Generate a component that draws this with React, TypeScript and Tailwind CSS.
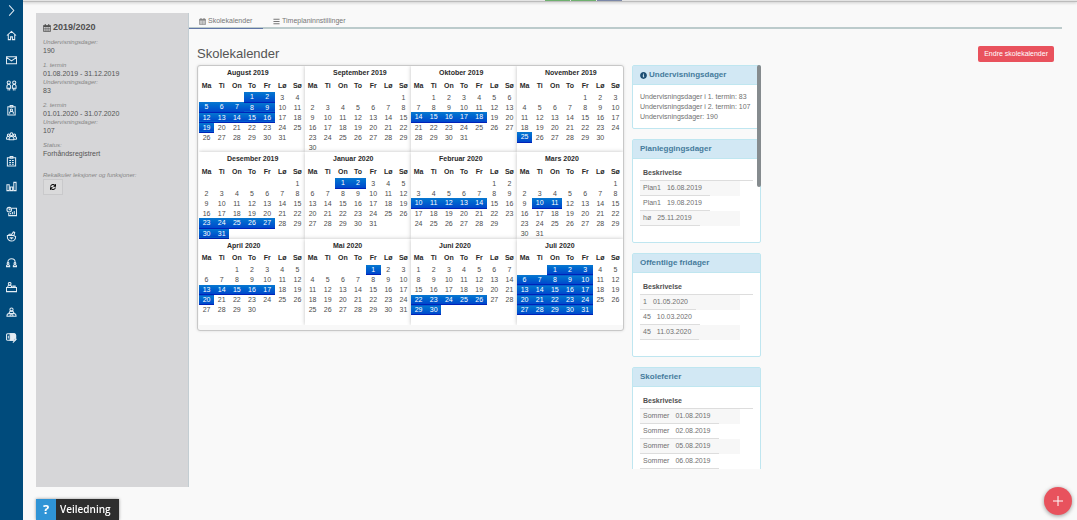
import type { ReactNode } from "react";
import { FaBars, FaInfoCircle, FaSync } from "react-icons/fa";
import { clsx } from "clsx";

type Month = {
  name: string;
  // index of the weekday of the 1st, monday = 0
  start: number;
  days: number;
  off: number[];
};

const WEEKDAYS = ["Ma", "Ti", "On", "To", "Fr", "Lø", "Sø"];

const MONTHS: Month[] = [
  { name: "August 2019", start: 3, days: 31, off: [1, 2, 5, 6, 7, 8, 9, 12, 13, 14, 15, 16, 19] },
  { name: "September 2019", start: 6, days: 30, off: [] },
  { name: "Oktober 2019", start: 1, days: 31, off: [14, 15, 16, 17, 18] },
  { name: "November 2019", start: 4, days: 30, off: [25] },
  { name: "Desember 2019", start: 6, days: 31, off: [23, 24, 25, 26, 27, 30, 31] },
  { name: "Januar 2020", start: 2, days: 31, off: [1, 2] },
  { name: "Februar 2020", start: 5, days: 29, off: [10, 11, 12, 13, 14] },
  { name: "Mars 2020", start: 6, days: 31, off: [10, 11] },
  { name: "April 2020", start: 2, days: 30, off: [13, 14, 15, 16, 17, 20] },
  { name: "Mai 2020", start: 4, days: 31, off: [1] },
  { name: "Juni 2020", start: 0, days: 30, off: [22, 23, 24, 25, 26, 29, 30] },
  {
    name: "Juli 2020",
    start: 2,
    days: 31,
    off: [1, 2, 3, 6, 7, 8, 9, 10, 13, 14, 15, 16, 17, 20, 21, 22, 23, 24, 27, 28, 29, 30, 31],
  },
];

const NAV: { label: string; icon: ReactNode }[] = [
  { label: "Utvid meny", icon: <path d="M7 1l10 11L7 23" /> },
  { label: "Hjem", icon: <path d="M2 12L12 3l10 9M5 10v11h5v-6h4v6h5V10" /> },
  { label: "Meldinger", icon: <path d="M1 4h22v15H1zM1 5l11 8 11-8" /> },
  {
    label: "Elever",
    icon: (
      <>
        <circle cx="6" cy="5.500" r="3.500" />
        <circle cx="18" cy="5.500" r="3.500" />
        <path d="M2 18v-5l2-3h4l2 3v5zM14 18v-5l2-3h4l2 3v5zM4.500 23v-5M8 23v-5M16 23v-5M19.500 23v-5" />
      </>
    ),
  },
  {
    label: "Ansatte",
    icon: (
      <>
        <path d="M4 4h16v18H4zM9 1h6v4H9z" />
        <circle cx="12" cy="11" r="2.5" />
        <path d="M8 19v-3l2-2h4l2 2v3" />
      </>
    ),
  },
  {
    label: "Grupper",
    icon: (
      <>
        <circle cx="12" cy="7" r="3" />
        <circle cx="5.5" cy="9" r="2.5" />
        <circle cx="18.5" cy="9" r="2.5" />
        <path d="M7 19v-4l3-3h4l3 3v4zM1 18v-3l2-3h4M23 18v-3l-2-3h-4M1 18h6M17 18h6" />
      </>
    ),
  },
  {
    label: "Timeplan",
    icon: <path d="M3 4h18v18H3zM9 1h6v4H9zM7 10h4M13 10h4M7 14h4M13 14h4M7 18h4M13 18h4" />,
  },
  { label: "Statistikk", icon: <path d="M2 8h5v13H2zM9.500 13h5v8h-5zM17 3h5v18h-5z" /> },
  {
    label: "Fravær",
    icon: (
      <>
        <circle cx="7" cy="8" r="5" />
        <path d="M7 5v3h3M13 5h10v16H6v-6M10 18v-3M14 18v-5M18 18v-7" />
      </>
    ),
  },
  {
    label: "Vurdering",
    icon: (
      <>
        <path d="M3 10h13l5 2c0 7-4 10-9 10s-9-4-9-9zM11 10l5-8 3 1-2 8" />
        <path d="M5 10l2-3h5M8 15h8M12 15v3" />
      </>
    ),
  },
  {
    label: "Samtaler",
    icon: (
      <>
        <path d="M4 12c0-6 4-8 8-8s8 2 8 8" />
        <circle cx="4.500" cy="14" r="2" />
        <circle cx="19.500" cy="14" r="2" />
        <path d="M1 21v-2l2-2h3l2 2v2zM16 21v-2l2-2h3l2 2v2z" />
      </>
    ),
  },
  {
    label: "Undervisning",
    icon: (
      <>
        <circle cx="8" cy="4" r="3" />
        <path d="M4 12V9l2-2h4l2 2v3M1 12h22v9H1zM15 12V9h5v3" />
      </>
    ),
  },
  {
    label: "Foresatte",
    icon: (
      <>
        <circle cx="12" cy="5.500" r="3.500" />
        <path d="M6 14l3-5h6l3 5M2 20c0-4 2-6 5-6h10c3 0 5 2 5 6zM9 20v-3h6v3" />
      </>
    ),
  },
  {
    label: "Administrasjon",
    icon: (
      <>
        <rect x="1" y="4" width="20" height="14" rx="3" />
        <path d="M9 4h9l3 3v5l-5 6H9z" fill="currentColor" />
        <path d="M5 8v6M15 23l8-8" />
      </>
    ),
  },
];

const OVERVIEW: [string, string][][] = [
  [["Undervisningsdager:", "190"]],
  [
    ["1. termin", "01.08.2019 - 31.12.2019"],
    ["Undervisningsdager:", "83"],
  ],
  [
    ["2. termin", "01.01.2020 - 31.07.2020"],
    ["Undervisningsdager:", "107"],
  ],
  [["Status:", "Forhåndsregistrert"]],
];

const LISTS: { title: string; rows: [string, string][] }[] = [
  {
    title: "Planleggingsdager",
    rows: [
      ["Plan1", "16.08.2019"],
      ["Plan1", "19.08.2019"],
      ["hø", "25.11.2019"],
    ],
  },
  {
    title: "Offentlige fridager",
    rows: [
      ["1", "01.05.2020"],
      ["45", "10.03.2020"],
      ["45", "11.03.2020"],
    ],
  },
  {
    title: "Skoleferier",
    rows: [
      ["Sommer", "01.08.2019"],
      ["Sommer", "02.08.2019"],
      ["Sommer", "05.08.2019"],
      ["Sommer", "06.08.2019"],
    ],
  },
];

function CalendarIcon({ className }: { className: string }) {
  return (
    <svg viewBox="0 0 16 16" className={className} fill="none" stroke="currentColor">
      <path d="M1 3h14v12H1z" strokeWidth="1.4" />
      <path d="M1 4.500h14" strokeWidth="3" />
      <path d="M4.500 0v4M11.500 0v4" strokeWidth="2" />
      <path d="M1 9h14M1 12h14M4.500 6v9M8 6v9M11.500 6v9" strokeWidth="0.9" />
    </svg>
  );
}

function Sidebar() {
  return (
    <nav className="w-[23px] shrink-0 bg-[#004b7c] pt-[2px]">
      <div className="flex h-[344px] flex-col items-center justify-between">
        {NAV.map((item) => (
          <a key={item.label} href="#" aria-label={item.label} className="flex h-4 items-center text-[#e4edf4]">
            <svg viewBox="0 0 24 24" className="size-[11px]" fill="none" stroke="currentColor" strokeWidth="2.2">
              {item.icon}
            </svg>
          </a>
        ))}
      </div>
    </nav>
  );
}

function YearPanel() {
  return (
    <aside className="mt-[11px] mb-[33px] w-[153px] shrink-0 border-r border-[#c3cdd2] bg-[#d6d6d8] px-[7px] pt-[9px]">
      <h2 className="mb-1 flex h-3 items-center gap-[2px] text-[9px] font-bold text-[#505050]">
        <CalendarIcon className="size-2" />
        2019/2020
      </h2>
      {OVERVIEW.map((group) => (
        <dl key={group[0][0]} className="mb-[6px]">
          {group.map(([label, value]) => (
            <div key={label}>
              <dt className="text-[6px] leading-[8px] text-[#858585] italic">{label}</dt>
              <dd className="text-[7px] leading-[9px] text-[#555]">{value}</dd>
            </div>
          ))}
        </dl>
      ))}
      <p className="mt-[13px] text-[6px] leading-[8px] text-[#858585] italic">Rekalkuler leksjoner og funksjoner:</p>
      <button
        type="button"
        aria-label="Rekalkuler"
        className="flex h-4 w-5 items-center justify-center border border-[#c9c9cb] bg-[#dadadb] text-black"
      >
        <FaSync className="size-[6px]" />
      </button>
    </aside>
  );
}

function MonthTable({ month }: { month: Month }) {
  const weeks = Array.from({ length: 6 }, (_, w) =>
    WEEKDAYS.map((_, d) => {
      const day = w * 7 + d - month.start + 1;
      return day > 0 && day <= month.days ? day : null;
    })
  );

  return (
    <div className="bg-white shadow-[0_0_4px_rgba(0,0,0,0.25)]">
      <table className="w-full table-fixed border-collapse text-center text-[7px] text-[#4c4c4c]">
        <caption className="h-[13px] pl-7 text-left leading-[13px] font-bold text-[#2a2a2a]">{month.name}</caption>
        <thead>
          <tr className="h-[13px] leading-[12px] text-[#2a2a2a]">
            {WEEKDAYS.map((d) => (
              <th key={d} className="p-0 font-bold">
                {d}
              </th>
            ))}
          </tr>
        </thead>
        <tbody>
          {weeks.map((week, w) => (
            <tr key={w} className="h-[10px] leading-[9px]">
              {week.map((day, d) => (
                <td
                  key={d}
                  className={clsx(
                    "p-0",
                    day !== null &&
                      month.off.includes(day) &&
                      "border-b border-[#0022b8] bg-linear-to-b from-[#0a78d0] to-[#0046cc] text-white"
                  )}
                >
                  {day}
                </td>
              ))}
            </tr>
          ))}
        </tbody>
      </table>
    </div>
  );
}

function Panel({ title, children }: { title: ReactNode; children: ReactNode }) {
  return (
    <section className="mb-[10px] rounded-[2px] border border-[#bfe6f0] bg-white">
      <h3 className="flex h-[19px] items-center gap-[2px] border-b border-[#bfe6f0] bg-[#d2e8f4] px-[7px] text-[8px] font-bold text-[#457b9c]">
        {title}
      </h3>
      {children}
    </section>
  );
}

function DayList({ rows }: { rows: [string, string][] }) {
  return (
    <table className="mx-[7px] mt-[7px] mb-4 block text-[7px] text-[#707070]">
      <thead className="block">
        <tr className="block">
          <th className="block h-[15px] border-b border-[#ddd] pl-[3px] text-left leading-[14px] font-bold text-[#505050]">
            Beskrivelse
          </th>
        </tr>
      </thead>
      <tbody className="block">
        {rows.map(([name, date]) => (
          <tr key={date} className="flex h-[15px] w-[100px] leading-[14px] odd:bg-[#f7f7f7]">
            <td className="border-b border-[#ddd] px-[3px]">{name}</td>
            <td className="border-b border-[#ddd] pr-2 pl-[3px]">{date}</td>
          </tr>
        ))}
      </tbody>
    </table>
  );
}

export default function App() {
  return (
    <div className="flex min-h-screen bg-[#f9f9f9] font-['Liberation_Sans',Arial,sans-serif] text-[#555]">
      <Sidebar />
      <div className="flex min-w-0 flex-1 flex-col">
        <div className="flex h-[2px] justify-center gap-px border-b border-[#bcbcbc] bg-[#e4e4e4] pl-[66px] shadow-[0_1px_3px_rgba(0,0,0,0.2)]">
          <div className="w-[25px] bg-[#6fb06f]" />
          <div className="w-[25px] bg-[#6fb06f]" />
          <div className="w-[25px] bg-[#7c88a8]" />
        </div>
        <div className="flex flex-1 pr-[15px] pl-[13px]">
          <YearPanel />
          <main className="min-w-0 flex-1 pt-3">
            <div className="flex h-[15px] border-b-2 border-[#bccbcc] text-[7px] text-[#777]">
              <a
                href="#"
                className="-mb-[2px] flex h-[15px] w-[74px] items-center gap-[2px] border-b border-[#6176a6] pl-[10px]"
              >
                <CalendarIcon className="size-[7px]" />
                Skolekalender
              </a>
              <a href="#" className="flex h-[14px] items-center gap-[2px] pl-[10px]">
                <FaBars className="size-[7px]" />
                Timeplaninnstillinger
              </a>
            </div>
            <div className="mr-2 ml-2 flex items-center justify-between pt-[17px]">
              <h1 className="text-[13px] leading-[16px] text-[#555]">Skolekalender</h1>
              <button type="button" className="h-4 rounded-[2px] bg-[#e9525d] px-[6px] text-[7px] text-white">
                Endre skolekalender
              </button>
            </div>
            <div className="mt-[3px] ml-2 flex items-start gap-2">
              <div className="w-[427px] rounded-[3px] border border-[#c8c8c8] bg-[#f8f8f8] pb-[5px] pl-px shadow-[0_0_3px_rgba(0,0,0,0.12)]">
                <div className="grid grid-cols-4 overflow-hidden rounded-t-[2px]">
                  {MONTHS.map((month) => (
                    <MonthTable key={month.name} month={month} />
                  ))}
                </div>
              </div>
              <div className="relative h-[404px] w-[129px] overflow-hidden">
                <Panel
                  title={
                    <>
                      <FaInfoCircle className="size-[7px] text-[#1d4f73]" />
                      Undervisningsdager
                    </>
                  }
                >
                  <div className="px-[7px] pt-[7px] pb-[6px] text-[7px] leading-[10px] whitespace-nowrap text-[#707070]">
                    <p>Undervisningsdager i 1. termin: 83</p>
                    <p>Undervisningsdager i 2. termin: 107</p>
                    <p>Undervisningsdager: 190</p>
                  </div>
                </Panel>
                {LISTS.map((list) => (
                  <Panel key={list.title} title={list.title}>
                    <DayList rows={list.rows} />
                  </Panel>
                ))}
                <div className="absolute top-0 right-0 h-[122px] w-1 rounded-full bg-[#858b8e]" />
              </div>
            </div>
          </main>
        </div>
      </div>

      <button
        type="button"
        className="fixed bottom-0 left-9 flex h-[21px] w-[83px] items-center bg-[#2e2e2e] font-['Open_Sans',sans-serif] text-[10px] leading-[21px] font-semibold text-white shadow-[0_0_3px_rgba(0,0,0,0.4)]"
      >
        <span className="flex h-full w-5 items-center justify-center bg-[#2f94d6] text-[13px] font-bold">?</span>
        <span className="pl-1">Veiledning</span>
      </button>
      <button
        type="button"
        aria-label="Legg til"
        className="fixed right-[5px] bottom-[5px] flex size-7 items-center justify-center rounded-full bg-[#e8525d] text-white shadow-[0_1px_4px_rgba(0,0,0,0.4)]"
      >
        <svg viewBox="0 0 10 10" className="size-[10px]" stroke="currentColor" strokeWidth="1">
          <path d="M5 0v10M0 5h10" />
        </svg>
      </button>
    </div>
  );
}
